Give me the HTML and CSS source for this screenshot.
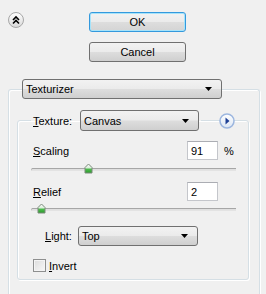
FILE: index.html
```html
<!DOCTYPE html>
<html lang="en">
<head>
    <meta charset="UTF-8">
    <title>Texturizer</title>
    <link rel="stylesheet" href="styles.css">
</head>
<body>

    <div class="top">
        <span class="collapse">
            <svg width="16" height="16" viewBox="0 0 16 16">
                <defs>
                    <linearGradient id="cg" x1="0" y1="0" x2="0" y2="1">
                        <stop offset="0" stop-color="#ffffff"/>
                        <stop offset="1" stop-color="#d8d8d8"/>
                    </linearGradient>
                </defs>
                <circle cx="8" cy="8" r="7.5" fill="url(#cg)" stroke="#a7a7a7"/>
                <path d="M5 8 L8 5 L11 8 M5 11.5 L8 8.5 L11 11.5" fill="none" stroke="#000" stroke-width="1.6"/>
            </svg>
        </span>
        <div class="actions">
            <button class="btn btn-default">OK</button>
            <button class="btn">Cancel</button>
        </div>
    </div>

    <fieldset class="group outer">
        <legend class="outer-legend">
            <div class="dropdown dd-filter">
                <span>Texturizer</span>
                <svg class="arrow" width="7" height="4" viewBox="0 0 7 4"><path d="M0 0 H7 L3.5 4 Z" fill="#000"/></svg>
            </div>
        </legend>

        <fieldset class="group inner">
            <legend class="inner-legend">
                <label class="legend-label"><u>T</u>exture:</label>
                <div class="dropdown dd-texture">
                    <span>Canvas</span>
                    <svg class="arrow" width="7" height="4" viewBox="0 0 7 4"><path d="M0 0 H7 L3.5 4 Z" fill="#000"/></svg>
                </div>
                <span class="more">
                    <svg width="16" height="16" viewBox="0 0 16 16">
                        <defs>
                            <linearGradient id="mg" x1="0" y1="0" x2="0" y2="1">
                                <stop offset="0" stop-color="#ffffff"/>
                                <stop offset="1" stop-color="#dce6f4"/>
                            </linearGradient>
                        </defs>
                        <circle cx="8" cy="8" r="7" fill="url(#mg)" stroke="#9cb6df" stroke-width="1.5"/>
                        <path d="M6.5 4.5 L10.5 8 L6.5 11.5 Z" fill="#1d3f95"/>
                    </svg>
                </span>
            </legend>

            <div class="field-row row-scaling">
                <label class="field-label"><u>S</u>caling</label>
                <input class="num" type="text" value="91">
                <span class="unit">%</span>
            </div>
            <div class="slider slider-scaling">
                <div class="track"></div>
                <span class="thumb" style="left: 53px;">
                    <svg width="9" height="11" viewBox="0 0 9 11">
                        <defs>
                            <linearGradient id="tg" x1="0" y1="0" x2="0" y2="1">
                                <stop offset="0" stop-color="#ffffff"/>
                                <stop offset="0.45" stop-color="#d9ecd9"/>
                                <stop offset="0.55" stop-color="#4fbf4f"/>
                                <stop offset="1" stop-color="#2c9a2c"/>
                            </linearGradient>
                        </defs>
                        <path d="M1 4.5 L4.5 1 L8 4.5 V10 H1 Z" fill="url(#tg)" stroke="#7a8a7a"/>
                    </svg>
                </span>
            </div>

            <div class="field-row row-relief">
                <label class="field-label"><u>R</u>elief</label>
                <input class="num" type="text" value="2">
                <span class="unit"></span>
            </div>
            <div class="slider slider-relief">
                <div class="track"></div>
                <span class="thumb" style="left: 6px;">
                    <svg width="9" height="11" viewBox="0 0 9 11">
                        <path d="M1 4.5 L4.5 1 L8 4.5 V10 H1 Z" fill="url(#tg)" stroke="#7a8a7a"/>
                    </svg>
                </span>
            </div>

            <div class="light-row">
                <label class="light-label"><u>L</u>ight:</label>
                <div class="dropdown dd-light">
                    <span>Top</span>
                    <svg class="arrow" width="7" height="4" viewBox="0 0 7 4"><path d="M0 0 H7 L3.5 4 Z" fill="#000"/></svg>
                </div>
            </div>

            <div class="check-row">
                <span class="checkbox"></span>
                <label><u>I</u>nvert</label>
            </div>
        </fieldset>
    </fieldset>

</body>
</html>
```

FILE: styles.css
```css
body {
    margin: 0;
    background: #f0f0f0;
    font-family: "Liberation Sans", Arial, sans-serif;
    font-size: 11px;
    color: #000;
    overflow: hidden;
}
u {
    text-decoration: underline;
    text-underline-offset: 1px;
}

/* top: collapse icon + buttons */
.top {
    display: flex;
    padding: 12px 0 0 8px;
    height: 62px;
    box-sizing: border-box;
}
.collapse {
    width: 16px;
    height: 16px;
    display: block;
}
.collapse svg {
    display: block;
}
.actions {
    display: flex;
    flex-direction: column;
    gap: 10px;
    margin-left: 65px;
}
.btn {
    width: 97px;
    height: 20px;
    padding: 0;
    font-family: inherit;
    font-size: 11px;
    color: #000;
    border: 1px solid #707070;
    border-radius: 3px;
    background: linear-gradient(#f2f2f2 0%, #ebebeb 48%, #dddddd 52%, #cfcfcf 100%);
}
.btn-default {
    border-color: #3399dd;
    box-shadow: inset 0 0 0 1px #a6e3fa;
    background: linear-gradient(#f2f2f2 0%, #ebebeb 48%, #dddddd 52%, #d4d4d4 100%);
}

/* group boxes */
.group {
    margin: 0;
    min-width: 0;
    border: 1px solid #d5dfe5;
    border-radius: 3px;
    box-shadow: inset 1px 1px 0 #fff, 1px 1px 0 #fff;
}
.outer {
    margin: 17px 0 0 8px;
    width: 252px;
    box-sizing: border-box;
    padding: 11px 10px 20px 8px;
    border-bottom: none;
}
.outer-legend {
    padding: 0;
    margin-left: 5px;
}
.inner {
    padding: 10px 12px 7px 13px;
}
.inner-legend {
    display: flex;
    align-items: center;
    padding: 0 2px;
    position: relative;
    height: 21px;
}
.legend-label {
    width: 47px;
}
.more {
    position: absolute;
    left: 188px;
    top: 3px;
    width: 16px;
    height: 16px;
}
.more svg {
    display: block;
}

/* dropdowns */
.dropdown {
    display: flex;
    align-items: center;
    justify-content: space-between;
    box-sizing: border-box;
    height: 20px;
    padding: 0 9px 0 3px;
    border: 1px solid #707070;
    border-radius: 3px;
    background: linear-gradient(#f2f2f2 0%, #ebebeb 48%, #dddddd 52%, #cfcfcf 100%);
}
.dropdown .arrow {
    display: block;
}
.dd-filter {
    width: 200px;
}
.dd-texture {
    width: 119px;
    height: 21px;
}
.dd-light {
    width: 120px;
}

/* numeric rows */
.field-row {
    display: flex;
    align-items: center;
    height: 19px;
}
.field-label {
    flex: 1;
    padding-left: 2px;
}
.num {
    width: 31px;
    height: 19px;
    box-sizing: border-box;
    padding: 0 3px;
    font-family: inherit;
    font-size: 11px;
    border: 1px solid #c4c6cb;
    border-top-color: #abadb3;
    background: #fff;
    outline: none;
}
.unit {
    width: 12px;
    margin-left: 6px;
}
.row-relief {
    margin-top: 8px;
}

/* sliders */
.slider {
    position: relative;
    height: 11px;
}
.slider-scaling {
    margin-top: 3px;
}
.slider-relief {
    margin-top: 2px;
}
.track {
    position: relative;
    top: 5px;
    height: 1px;
    border-top: 1px solid #a6a6a6;
    border-bottom: 1px solid #e3e3e3;
    border-left: 1px solid #bdbdbd;
    border-radius: 2px 0 0 2px;
    background: #e0e0e0;
}
.thumb {
    position: absolute;
    top: 0;
    width: 9px;
    height: 11px;
}
.thumb svg {
    display: block;
}

/* light + invert */
.light-row {
    display: flex;
    align-items: center;
    margin-top: 12px;
    padding-left: 14px;
}
.light-label {
    width: 33px;
}
.check-row {
    display: flex;
    align-items: center;
    margin-top: 13px;
    padding-left: 2px;
    height: 13px;
}
.checkbox {
    width: 13px;
    height: 13px;
    box-sizing: border-box;
    border: 1px solid #8e8f8f;
    background: linear-gradient(135deg, #dcdcdc, #f8f8f8);
    box-shadow: inset 0 0 0 1px #f4f4f4;
    margin-right: 3px;
}
```
